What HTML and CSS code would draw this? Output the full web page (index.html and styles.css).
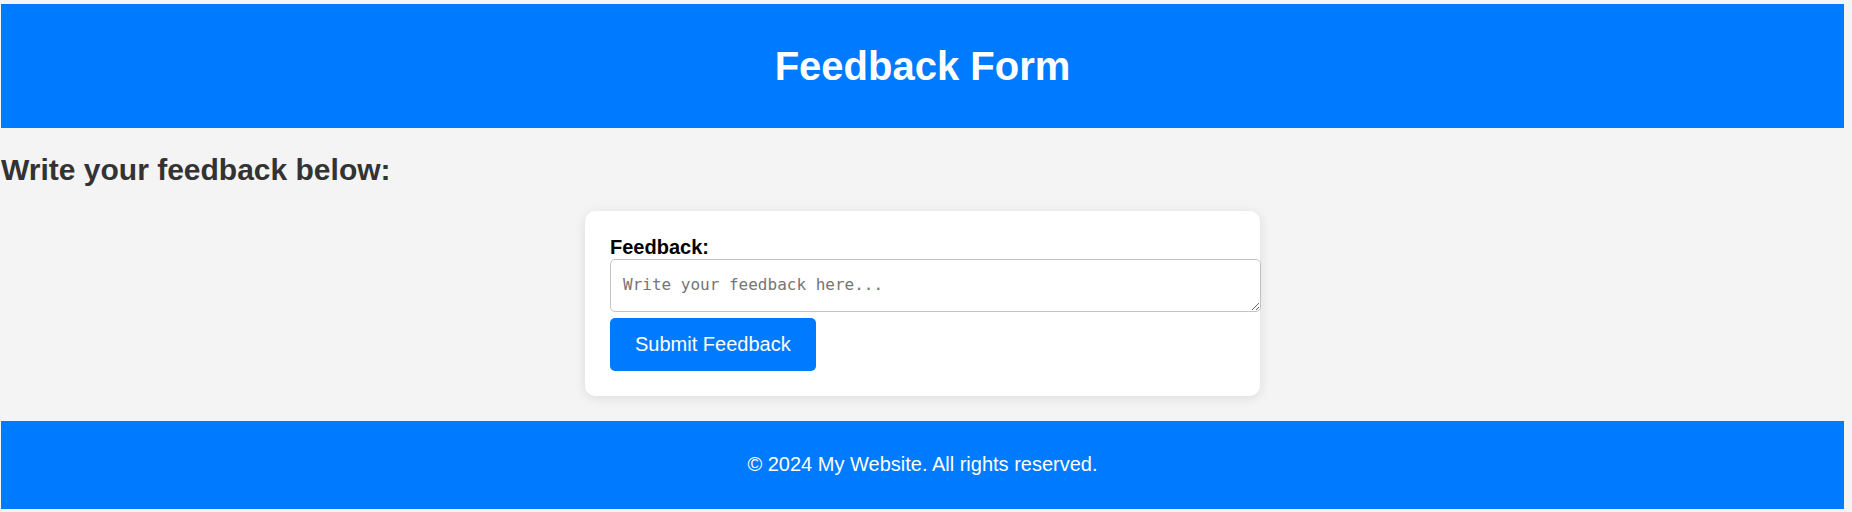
FILE: index.html
```html
<!DOCTYPE html>
<html lang="en">
<head>
<meta charset="utf-8">
<title>Feedback Form</title>
<link rel="stylesheet" href="styles.css">
</head>
<body>
<div class="page">
  <header class="site-header">
    <h1 class="site-title">Feedback Form</h1>
  </header>
  <main class="content">
    <h2 class="intro">Write your feedback below:</h2>
    <form class="feedback-card">
      <label class="field-label" for="feedback">Feedback:</label>
      <textarea id="feedback" class="field-input" placeholder="Write your feedback here..."></textarea>
      <button type="submit" class="submit-btn">Submit Feedback</button>
    </form>
  </main>
  <footer class="site-footer">
    <p class="copyright">© 2024 My Website. All rights reserved.</p>
  </footer>
</div>
</body>
</html>
```

FILE: styles.css
```css
html, body {
  margin: 0;
  padding: 0;
  background: #f4f4f4;
  font-family: "Liberation Sans", Arial, sans-serif;
}

.page {
  padding: 4px 8px 0 1px;
}

.site-header {
  background: #007bff;
  color: #ffffff;
  padding: 12px 0;
  text-align: center;
}

.site-title {
  margin: 27px 0;
  font-size: 40px;
  line-height: 46px;
  font-weight: bold;
}

.content {
  display: block;
}

.intro {
  margin: 24px 0;
  font-size: 30px;
  line-height: 35px;
  font-weight: bold;
  color: #333333;
}

.feedback-card {
  width: 625px;
  margin: 0 auto;
  padding: 25px;
  background: #ffffff;
  border-radius: 10px;
  box-shadow: 0 2px 12px rgba(0, 0, 0, 0.1);
}

.field-label {
  display: block;
  font-size: 20px;
  line-height: 23px;
  font-weight: bold;
  color: #000000;
}

.field-input {
  display: block;
  box-sizing: content-box;
  width: 100%;
  height: 27px;
  margin: 0 0 6px 0;
  padding: 12px;
  border: 1px solid #c4c4c4;
  border-radius: 5px;
  font-family: "DejaVu Sans Mono", "Liberation Mono", monospace;
  font-size: 16px;
  line-height: 25px;
  color: #222222;
  background: #ffffff;
  resize: vertical;
}

.field-input::placeholder {
  color: #757575;
}

.submit-btn {
  display: block;
  padding: 15px 25px;
  border: none;
  border-radius: 5px;
  background: #007bff;
  color: #ffffff;
  font-family: "Liberation Sans", Arial, sans-serif;
  font-size: 20px;
  line-height: 23px;
  cursor: pointer;
}

.site-footer {
  margin-top: 25px;
  padding: 12px 0 13px;
  background: #007bff;
  color: #ffffff;
  text-align: center;
}

.copyright {
  margin: 20px 0;
  font-size: 20px;
  line-height: 23px;
}
```
